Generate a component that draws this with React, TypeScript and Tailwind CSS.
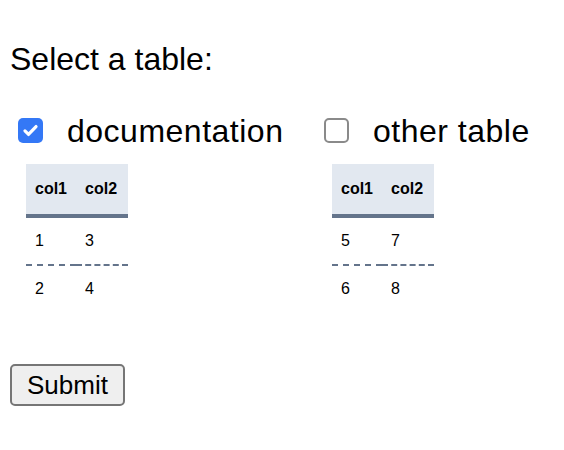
import React from "react";

type TableData = { rows: [string, string][] };

const DataTable = ({ rows }: TableData) => {
  return (
    <table className="border-collapse text-[16px] leading-[18px] text-black">
      <thead>
        <tr className="bg-[#e2e8f0] border-b-4 border-[#64748b]">
          <th className="pl-[9px] pr-[9px] py-4 text-left font-bold">col1</th>
          <th className="pl-[9px] pr-[11px] py-4 text-left font-bold">col2</th>
        </tr>
      </thead>
      <tbody>
        {rows.map((r, i) => (
          <tr key={i} className={i < rows.length - 1 ? "border-b-2 border-dashed border-[#64748b]" : ""}>
            <td className="pl-[9px] pr-[9px] py-[14px]">{r[0]}</td>
            <td className="pl-[9px] pr-[11px] py-[14px]">{r[1]}</td>
          </tr>
        ))}
      </tbody>
    </table>
  );
};

const Check = ({ checked }: { checked: boolean }) =>
  checked ? (
    <span className="flex h-[25px] w-[25px] items-center justify-center rounded-[5px] bg-[#3478f6]">
      <svg viewBox="0 0 24 24" className="h-[19px] w-[19px]" fill="none" stroke="white" strokeWidth="4" strokeLinecap="round" strokeLinejoin="round">
        <path d="M5 12.5l4.5 4.5L19 7" />
      </svg>
    </span>
  ) : (
    <span className="block h-[25px] w-[25px] rounded-[5px] border-2 border-[#8a8a8a] bg-white" />
  );

const Group = ({ label, checked, rows }: { label: string; checked: boolean; rows: [string, string][] }) => (
  <div className="flex flex-col">
    <label className="flex h-[37px] items-center gap-6 pl-2 text-[32px] tracking-[0.5px]">
      <Check checked={checked} />
      <span>{label}</span>
    </label>
    <div className="mt-[15px] pl-4">
      <DataTable rows={rows} />
    </div>
  </div>
);

export default function App() {
  return (
    <div className="min-h-[450px] bg-white p-[10px] font-['Liberation_Sans',Arial,sans-serif] text-black">
      <p className="mt-[31px] text-[32px] leading-[37px]">Select a table:</p>
      <div className="mt-[34px] grid grid-cols-[306px_auto]">
        <Group label="documentation" checked rows={[["1", "3"], ["2", "4"]]} />
        <Group label="other table" checked={false} rows={[["5", "7"], ["6", "8"]]} />
      </div>
      <button className="mt-[52px] rounded-[5px] border-2 border-[#767676] bg-[#efefef] px-[15px] py-1 text-[26px] leading-[30px]">
        Submit
      </button>
    </div>
  );
}
